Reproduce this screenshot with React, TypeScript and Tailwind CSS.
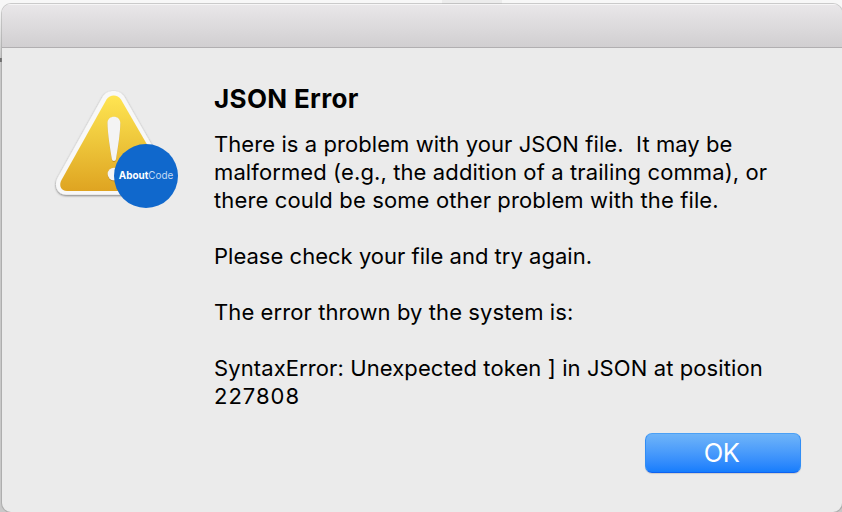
type Line = { text: string; spacing: string };

const message: Line[] = [
  { text: "There is a problem with your JSON file.  It may be", spacing: "tracking-[0.07px]" },
  { text: "malformed (e.g., the addition of a trailing comma), or", spacing: "tracking-[0.11px]" },
  { text: "there could be some other problem with the file.", spacing: "tracking-[0.13px]" },
  { text: "", spacing: "" },
  { text: "Please check your file and try again.", spacing: "tracking-[0.02px]" },
  { text: "", spacing: "" },
  { text: "The error thrown by the system is:", spacing: "tracking-[0.09px]" },
  { text: "", spacing: "" },
  { text: "SyntaxError: Unexpected token ] in JSON at position", spacing: "tracking-[0.1px]" },
  { text: "227808", spacing: "tracking-[1px]" },
];

function WarningIcon() {
  return (
    <svg width="150" height="140" viewBox="0 0 150 140" className="block">
      <defs>
        <linearGradient id="amber" x1="0" y1="0" x2="0" y2="1">
          <stop offset="0" stopColor="#ffe552" />
          <stop offset="0.45" stopColor="#efc93d" />
          <stop offset="1" stopColor="#dfa421" />
        </linearGradient>
        <filter id="edge" x="-10%" y="-10%" width="120%" height="125%">
          <feDropShadow dx="0" dy="1" stdDeviation="0.9" floodColor="#000" floodOpacity="0.5" />
        </filter>
        <filter id="markShade" x="-30%" y="-10%" width="160%" height="120%">
          <feDropShadow dx="0" dy="0.7" stdDeviation="0.7" floodColor="#805500" floodOpacity="0.6" />
        </filter>
      </defs>
      <path
        d="M62.5 17 C67 9 80 9 84.5 17 L130 97 C134 106 130 114.700 121 114.700 H26 C17.500 114.700 13.500 106 17.500 98 Z"
        fill="#f8f8f8"
        filter="url(#edge)"
      />
      <path d="M66.500 19.500 C70 14 77.500 14 81 19.500 L127 99 C130 105 127 111 121 111 H27 C21 111 18.500 105.500 21.500 100 Z" fill="url(#amber)" />
      <g fill="#f4f4f4" filter="url(#markShade)">
        <path d="M67.500 43 C67.500 34.800 80.300 34.800 80.300 43 C80.300 53 77.500 70 76 79 C75.600 81.600 72.300 81.600 71.900 79 C70.400 70 67.500 53 67.500 43 Z" />
        <circle cx="74" cy="94" r="6.300" />
      </g>
      <circle cx="106" cy="96" r="32" fill="#1068cc" />
      <text x="78.800" y="99.300" fontSize="10.500" fontWeight="700" fill="#fff" fontFamily="Inter, sans-serif" textLength="29.500" lengthAdjust="spacingAndGlyphs">
        About
      </text>
      <text x="108.300" y="99.300" fontSize="10.500" fontWeight="400" fill="#c3dbf5" fontFamily="Inter, sans-serif" textLength="25" lengthAdjust="spacingAndGlyphs">
        Code
      </text>
    </svg>
  );
}

export default function App() {
  return (
    <div className="h-[512px] w-[842px] overflow-hidden bg-[linear-gradient(to_right,#f7f7f7_442px,#ececec_442px,#ececec_502px,#f7f7f7_502px)] font-['Inter',sans-serif] text-black">
      <div className="h-full bg-[linear-gradient(#0000_8px,#c8c8c8_58px,#6f6f6f_58px,#6f6f6f_62px,#c8c8c8_62px)] pl-[2px] pt-[4px]">
        <div className="flex h-[508px] w-[840px] flex-col overflow-hidden rounded-[9px] bg-[#ebebeb] shadow-[0_0_0_1px_#8886]">
          <header className="h-[44px] shrink-0 border-b border-[#b1afb1] bg-linear-to-b from-[#e9e7e9] to-[#d1cfd1] shadow-[inset_0_1px_0_#f6f5f6]" />
          <main className="flex">
            <div className="w-[212px] shrink-0 pl-[38px] pt-[32px]">
              <WarningIcon />
            </div>
            <section className="pt-[35px]">
              <h1 className="h-[47px] text-[26px] leading-[32px] font-bold tracking-[0.35px]">JSON Error</h1>
              <div className="text-[22px] leading-[28px]">
                {message.map((line, i) => (
                  <p key={i} className={`h-[28px] whitespace-pre ${line.spacing}`}>
                    {line.text}
                  </p>
                ))}
              </div>
            </section>
          </main>
          <footer className="mt-[23px] flex justify-end pr-[41px]">
            <button className="flex h-[40px] w-[156px] items-center justify-center rounded-[7px] border border-t-[#4ba0f5] border-x-[#308df5] border-b-[#0f62f0] bg-linear-to-b from-[#6fb4f8] to-[#157dfd] pr-[3px] text-[25.5px] leading-[30px] tracking-[-0.5px] text-white shadow-[0_1px_1px_#0002]">
              OK
            </button>
          </footer>
        </div>
      </div>
    </div>
  );
}
